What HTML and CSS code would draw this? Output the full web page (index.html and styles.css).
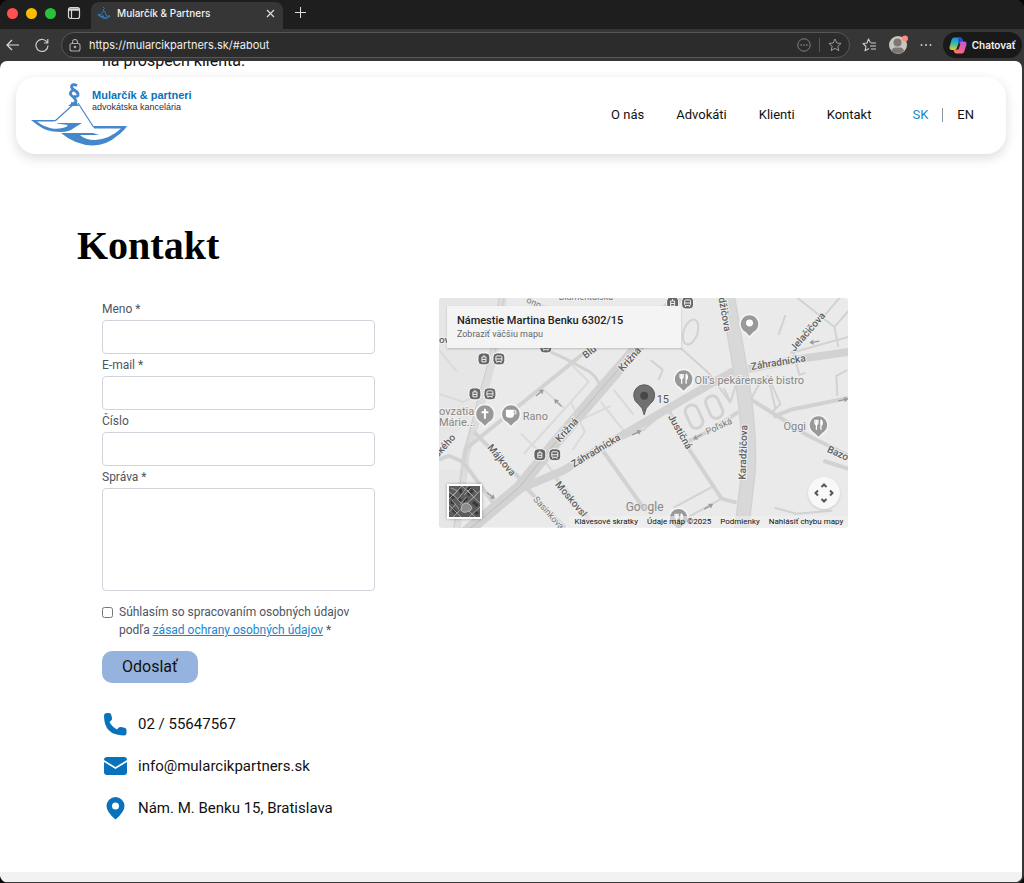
FILE: index.html
```html
<!DOCTYPE html>
<html lang="sk">
<head>
<meta charset="utf-8">
<meta name="viewport" content="width=device-width, initial-scale=1">
<title>Mularčík &amp; Partners</title>
<link rel="stylesheet" href="styles.css">
</head>
<body>
<div class="window">
  <div class="tabs">
    <div class="lights"><span class="light red"></span><span class="light yellow"></span><span class="light green"></span></div>
    <button class="icon-btn tab-menu" aria-label="Karty"><svg width="14" height="14" viewBox="0 0 14 14" fill="none" stroke="#d8d8d8" stroke-width="1.2"><rect x="1.5" y="1.5" width="11" height="11" rx="2"/><path d="M2 3.5h10" stroke-width="2.4"/><path d="M4.500 4v8"/></svg></button>
    <div class="tab">
      <svg width="14" height="14" viewBox="0 0 14 14" fill="none" stroke="#2f77b8"><path d="M6 1l1.500 1.500L6 4l1.500 1.500M6.500 5L4 8.500H1M7.500 5L9.500 10H13"/><path d="M1 8.500q3 3 6 1.500M4 10.500q4 3.500 9-.5" stroke-width="1.500"/></svg>
      <span class="tab-title">Mularčík &amp; Partners</span>
      <button class="icon-btn" aria-label="Zavrieť kartu"><svg width="9" height="9" viewBox="0 0 9 9" stroke="#ddd" stroke-width="1.2"><path d="M1 1l7 7M8 1L1 8"/></svg></button>
    </div>
    <button class="icon-btn new-tab" aria-label="Nová karta"><svg width="11" height="11" viewBox="0 0 11 11" stroke="#ddd"><path d="M5.500 0v11M0 5.500h11"/></svg></button>
  </div>
  <div class="toolbar">
    <button class="icon-btn" aria-label="Späť"><svg width="14" height="12" viewBox="0 0 14 12" fill="none" stroke="#ddd" stroke-width="1.2"><path d="M13 6H1M6 1L1 6l5 5"/></svg></button>
    <button class="icon-btn" aria-label="Obnoviť"><svg width="14" height="14" viewBox="0 0 14 14" fill="none" stroke="#ccc" stroke-width="1.2"><path d="M12.500 5A6 6 0 1 0 13 7.500M12.800 1v4H9"/></svg></button>
    <div class="address">
      <svg width="12" height="13" viewBox="0 0 12 13" fill="none" stroke="#aaa" stroke-width="1.1"><rect x="1" y="4.500" width="10" height="7.500" rx="2"/><path d="M3.500 4.500V3a2.500 2.500 0 0 1 5 0v1.500"/><circle cx="6" cy="8" r=".8" fill="#bbb"/></svg>
      <input class="url" type="text" aria-label="Adresa" value="https://mularcikpartners.sk/#about">
      <button class="icon-btn" aria-label="Možnosti stránky"><svg width="14" height="14" viewBox="0 0 14 14" fill="none" stroke="#808080"><circle cx="7" cy="7" r="6.200"/><path d="M3.500 7h1.500M6.200 7h1.500M9 7h1.500" stroke-width="1.500"/></svg></button>
      <span class="address-split"></span>
      <button class="icon-btn" aria-label="Obľúbiť"><svg width="14" height="14" viewBox="0 0 14 14" fill="none" stroke="#999" stroke-linejoin="round"><path d="M7 1l1.800 4 4.300.4-3.300 2.900 1 4.300L7 10.400l-3.800 2.200 1-4.300L.9 5.400l4.300-.4z"/></svg></button>
    </div>
    <div class="actions">
      <button class="icon-btn" aria-label="Obľúbené"><svg width="14" height="14" viewBox="0 0 14 14" fill="none" stroke="#ccc" stroke-linejoin="round" stroke-width="1.1"><path d="M8.500 4.800L6.500 1 5 5 1 5.500l3 3-1 4.300 4-2.300M9 5h5M8 8h6M9 11h5"/></svg></button>
      <button class="icon-btn" aria-label="Profil"><svg width="20" height="20" viewBox="0 0 20 20"><circle cx="10" cy="10" r="9" fill="#c9c6c2"/><circle cx="9.500" cy="7.500" r="4" fill="#7d7873"/><path d="M3.200 16q1.300-3.500 4-3.500h5q2.700 0 4 3.500a9 9 0 0 1-13 0z" fill="#7d7873"/><circle cx="17" cy="3.500" r="3" fill="#ff8d86"/></svg></button>
      <button class="icon-btn" aria-label="Ďalšie"><svg width="12" height="4" viewBox="0 0 12 4" fill="#ccc"><circle cx="1.500" cy="2" r="1"/><circle cx="6" cy="2" r="1"/><circle cx="10.500" cy="2" r="1"/></svg></button>
    </div>
    <button class="copilot"><svg width="18" height="17" viewBox="0 0 18 17"><defs><linearGradient id="cpa" x1="0" y1="0" x2="0" y2="1"><stop offset="0" stop-color="#168ce8"/><stop offset=".5" stop-color="#35bda0"/><stop offset="1" stop-color="#f2c62c"/></linearGradient><linearGradient id="cpb" x1="1" y1="0" x2="0" y2="1"><stop offset="0" stop-color="#a75cf0"/><stop offset=".5" stop-color="#ee5c9a"/><stop offset="1" stop-color="#ff8a3c"/></linearGradient></defs><path d="M5 .5h6q2 0 2.500 2l.5 2h-2q-2 0-2.600 2L8 11q-.6 2-2.500 2H2Q0 12.500.5 10L2.500 3Q3.200.5 5 .5z" fill="url(#cpa)"/><path d="M9 .5h2.500q1.500 0 2 2l.5 2h-2q-1.500 0-2.500 1.500z" fill="#1a4fd0"/><path d="M13 4.500h3q2 .5 1.500 3l-2 6.500q-.7 2.500-2.500 2.500H7.500q-2 0-2.500-2L4.500 13H6q2 0 2.600-2l1.500-4.500q.7-2 2.900-2z" fill="url(#cpb)"/><path d="M9.800 6.500l1.700 0-2 6H7.300z" fill="#222"/></svg>Chatovať</button>
  </div>

  <div class="page">
    <p class="excerpt">na prospech klienta.</p>
    <header class="site-header">
      <a class="brand" href="#top">
        <svg class="brand-mark" width="97" height="63" viewBox="0 0 97 63">
          <g fill="#4488cb"><path fill-rule="evenodd" d="M0 37h25l-2 1.500H6q6 5 15 7 8 1 14-1.500l2-2-11-1.500V40h25q-5 3-8 5-5 4-13 4-10 0-17-3-6-3-13-9z"/><path fill-rule="evenodd" d="M30 50h32l6 2H49q5 5 15 5 15-1 26-11.500H63L62 43h34q-3 5-10 10-10 9-24 9.500-18-.5-32-12.500z"/><path d="M37 23l7-5 4 5z"/></g>
          <path d="M24 38L44 20M47 20l15.500 24" stroke="#4488cb" stroke-width="1.200"/>
          <path d="M46 2.500q-5-2-5.500 1 0 2 3.500 4t3 5q-1 1.500-4 1M43 6.500q-5 2.500-3 5.500 5 4 5 6.500 0 2.500-5 2" fill="none" stroke="#4488cb" stroke-width="2.800"/>
        </svg>
        <span class="brand-text"><strong class="brand-name">Mularčík &amp; partneri</strong><span class="brand-sub">advokátska kancelária</span></span>
      </a>
      <nav class="nav">
        <a href="#about">O nás</a><a href="#lawyers">Advokáti</a><a href="#clients">Klienti</a><a href="#contact">Kontakt</a>
        <div class="langs"><a class="active" href="#sk">SK</a><span class="lang-split"></span><a href="#en">EN</a></div>
      </nav>
    </header>

    <main class="contact" id="contact">
      <h1 class="title">Kontakt</h1>
      <div class="columns">
        <div class="left">
          <form class="form">
            <label for="name">Meno *</label><input class="field" id="name" type="text">
            <label for="email">E-mail *</label><input class="field" id="email" type="email">
            <label for="phone">Číslo</label><input class="field" id="phone" type="tel">
            <label for="message">Správa *</label><textarea class="field message" id="message"></textarea>
            <div class="consent"><input class="check" type="checkbox" id="consent"><label for="consent">Súhlasím so spracovaním osobných údajov podľa <a href="#privacy">zásad ochrany osobných údajov</a> *</label></div>
            <button class="submit" type="submit">Odoslať</button>
          </form>
          <ul class="details">
            <li><svg width="26" height="26" viewBox="0 0 26 26" fill="#0873bc"><path d="M2 5Q2 2 5 2h2q2 0 2.300 2l.7 3q.3 1.500-.8 2.500L7.500 11q2.500 5 7.500 7.500l1.500-1.700q1-1.100 2.500-.8l3.500.7q2 .5 2 2.300v3q0 2.500-3 2.500Q2 24 2 5z"/></svg>02 / 55647567</li>
            <li><svg width="26" height="26" viewBox="0 0 26 26" fill="#0873bc"><path d="M2 7q0-3 3-3h17q3 0 3 3l-11.500 7zM2 9l11.500 7L25 9v10q0 3-3 3H5q-3 0-3-3z"/></svg>info@mularcikpartners.sk</li>
            <li><svg width="26" height="26" viewBox="0 0 26 26" fill="#0873bc"><path fill-rule="evenodd" d="M13.500 2A9 9 0 0 0 4.500 11q0 6 9 13.500 9-7.500 9-13.500a9 9 0 0 0-9-9zm0 5.500a3.500 3.500 0 1 1 0 7 3.500 3.500 0 0 1 0-7z"/></svg>Nám. M. Benku 15, Bratislava</li>
          </ul>
        </div>
        <div class="map">
          <svg class="map-canvas" viewBox="438 298 410 230" preserveAspectRatio="xMidYMid slice" role="img" aria-label="Mapa">
            <defs>
              <g id="tram"><rect x="-6" y="-6" width="12" height="12" rx="4" fill="#666" stroke="#fff" stroke-width="1"/><path d="M-2 -2h4v5h-4zM0 -4v2M-2 0.500h4" stroke="#f2f2f2" fill="none"/></g>
              <g id="bus"><rect x="-6" y="-6" width="12" height="12" rx="4" fill="#666" stroke="#fff" stroke-width="1"/><rect x="-3" y="-3" width="6" height="5.500" rx="1" fill="none" stroke="#f2f2f2"/><path d="M-3 0h6M-2 3v1M2 3v1" stroke="#f2f2f2"/></g>
              <path id="pin" d="M0 13L-4.500 8.500A9.500 9.500 0 1 1 4.500 8.500z" fill="#999" stroke="#f6f6f6" stroke-width="1.500"/>
              <g id="fork" fill="none" stroke="#fff" stroke-width="1.300"><path d="M-3.500-5v3q0 1.500 1.500 1.500T-.5-2v-3M-2-5v10M2.500-5v10M2.500-5q2 2 1 5h-1"/></g>
              <path id="arrow" d="M-5 0H4M1-2l3 2-3 2" fill="none" stroke="#999" stroke-width="1.300"/>
            </defs>
            <rect x="438" y="298" width="410" height="230" fill="#eaeaea"/>
            <path d="M438 298h64l-14 68-18 50-32 42zM438 470l22 0-6 58h-16z" fill="#e6e6e6"/>
            <g fill="none" stroke="#d2d2d2" stroke-linejoin="round">
              <path d="M502 298l-10 60-12 46-15 50-9 74" stroke="#dcdcdc" stroke-width="8"/>
              <path d="M498 298l-10 62-13 46-12 50-10 72M503 298l-10 60" stroke="#ccc" stroke-width="1"/>
              <path d="M438 460l10-4 14 6 34 46M463 461l2-12 133-108M473 432l46 47 9 12 36 37M553 475l36 46" stroke-width="4"/>
              <path d="M525 300l35 12 25 4M438 350l18 22M438 394l24 8 14-6M543 390l20 18M573 399l-50 55M520 434l23 22M535 450l35 45M568 362l20 20-18 20 14 30-12 18M600 402l24 30M613 390l20 25M580 420l30-14" stroke="#dadada" stroke-width="2"/>
              <path d="M541 348l24 11 24 13q12 9 11 24" stroke-width="3"/>
              <path d="M680 348l28 25 22 30M650 360l12 10-4 10M785 315l-7 20M723 388l7 14 5-16M673 508l41-22M683 520l38-21M623 438l20-8 14-12M750 400l10-18M767 375l8 34M792 350l7 25 6-2M837 396l-1-20 11-6" stroke-width="2"/>
              <path d="M600 448l44 62M667 408l14 30 40 61 15 4M687 442l24-12 27-18M748 398l35 22 23 15 24 12 18 9M773 417l17-7 58-12M823 461l25 8" stroke-width="4"/>
              <path d="M839 298l-22 26-26 29M797 298l37 29 4 20M834 327l14-16M790 353l58-16M770 382l10 22-10 10M774 508l22 6 36-3" stroke-width="2"/>
              <path d="M465 533l52-43 45-19 64-38 58-34 49-28M748 369l52-10 48-7" stroke-width="8"/>
              <path d="M678 296l-46 57-34 39-41 48-39 48-56 47" stroke-width="12"/>
              <path d="M678 296l-46 57-34 39-41 48-39 48-56 47" stroke="#bdbdbd" stroke-width="1"/>
              <path d="M727 296l13 75q10 60 8 100l-7 60" stroke-width="15"/>
              <path d="M727 296l13 75q10 60 8 100l-7 60" stroke="#d8d8d8" stroke-width="12"/>
              <ellipse cx="690" cy="332" rx="7" ry="13" transform="rotate(18 690 332)" stroke-width="2"/>
              <rect x="687" y="405" width="13" height="24" rx="6" transform="rotate(-24 693 417)" stroke-width="3"/>
              <rect x="707" y="396" width="13" height="23" rx="6" transform="rotate(-24 713 407)" stroke-width="3"/>
            </g>
            <use href="#arrow" transform="translate(539 393) rotate(-40)"/><use href="#arrow" transform="translate(557 403) rotate(225)"/><use href="#arrow" transform="translate(490 496) rotate(40)"/><use href="#arrow" transform="translate(636 433) rotate(-25)"/><use href="#arrow" transform="translate(697 437) rotate(150)"/><use href="#arrow" transform="translate(708 507) rotate(-30)"/><use href="#arrow" transform="translate(843 400) rotate(-12)"/><use href="#arrow" transform="translate(814 342) rotate(170)"/>
            <g class="road-label">
              <text transform="translate(559 443) rotate(-48)">Križná</text><text transform="translate(622 372) rotate(-48)">Križná</text>
              <text transform="translate(573 468) rotate(-31)">Záhradnícka</text><text transform="translate(751 370) rotate(-9)">Záhradnícka</text>
              <text transform="translate(745 480) rotate(-88)">Karadžičova</text><text transform="translate(718 298) rotate(80)">džičova</text>
              <text transform="translate(486 448) rotate(50)">Májkova</text><text transform="translate(554 485) rotate(50)">Moskovsl</text>
              <text transform="translate(667 417) rotate(60)">Justičná</text><text transform="translate(794 352) rotate(-49)">Jelačičova</text>
              <text transform="translate(585 359) rotate(-38)">Blu</text><text transform="translate(826 452) rotate(24)">Bazo</text>
              <text transform="translate(437 458) rotate(-48)">ského</text><text x="438" y="343">ov</text>
            </g>
            <g class="minor-label"><text transform="translate(532 500) rotate(48)">Sasinkova</text><text transform="translate(707 435) rotate(-25)">Poľská</text><text x="558" y="300">Blumentálska</text><text transform="translate(525 302) rotate(25)">onn</text></g>
            <g class="place-label"><text x="694" y="384">Oli’s pekárenské bistro</text><text x="522" y="420">Rano</text><text x="783" y="430">Oggi</text><text x="438" y="415">ovzatia</text><text x="438" y="426">Márie...</text><text x="656" y="403" fill="#555">15</text></g>
            <use href="#tram" x="483" y="359"/><use href="#bus" x="498" y="359"/><use href="#tram" x="474" y="394"/><use href="#bus" x="489" y="394"/><use href="#tram" x="539" y="455"/><use href="#bus" x="554" y="455"/><use href="#tram" x="672" y="303"/><use href="#bus" x="687" y="303"/><use href="#bus" x="545" y="347"/>
            <use href="#pin" x="484" y="414"/><path d="M484 409v10M480.500 412.500h7" stroke="#fff" stroke-width="2"/>
            <use href="#pin" x="510" y="414"/><path d="M505 410h8v5q0 3-3 3h-2q-3 0-3-3z" fill="#fff"/><path d="M513 411h2v3h-2" fill="none" stroke="#fff"/>
            <use href="#pin" x="683" y="379"/><use href="#fork" x="683" y="379"/><use href="#pin" x="818" y="425"/><use href="#fork" x="818" y="425"/><use href="#pin" x="678" y="518"/><use href="#fork" x="678" y="519"/>
            <use href="#pin" x="749" y="324"/><circle cx="749" cy="323" r="3.500" fill="#fff"/>
            <path d="M643.500 415q-1-7-6-11a10.500 10.500 0 1 1 12 0q-5 4-6 11z" fill="#707070" stroke="#5c5c5c"/><circle cx="643.500" cy="396" r="4" fill="#484848"/>
            <text class="google" x="625" y="511">Go<tspan fill="#b3b3b3">o</tspan>gle</text>
          </svg>
          <div class="map-card"><strong>Námestie Martina Benku 6302/15</strong><a href="#map">Zobraziť väčšiu mapu</a></div>
          <button class="satellite" aria-label="Satelitná mapa"><svg width="31" height="31" viewBox="0 0 31 31"><rect width="31" height="31" fill="#5c5c5c"/><path d="M1 9l4 3M10 3l3 4M19 9l5-5M14 16l4-4M3 22l4 5M24 16l5 4M9 12l3 3M26 26l3 2M18 2l4 1M2 16l3 1" stroke="#383838" stroke-width="3"/><path d="M0 6l9 7 10-13M0 19l12 12M4 31L31 5M13 0l18 17M0 13L13 0M8 13l18 18M20 31l11-10M2 2l7 3M24 3l5 5M0 26l7-8M15 9l7-7M5 9l5-6M11 19l6-8M22 14l6-6M3 14l7 9M18 4l6 6" stroke="#a0a0a0" fill="none"/><path d="M13 19q4-4 8 0 4 4-1 6-6 3-8-1z" fill="#8d8d8d" stroke="#bbb"/></svg></button>
          <button class="camera" aria-label="Ovládanie kamery"><svg width="20" height="20" viewBox="0 0 20 20" fill="none" stroke="#555" stroke-width="2"><path d="M7.500 4l2.500-2.500 2.500 2.500M7.500 16l2.500 2.500 2.500-2.500M4 7.500L1.500 10 4 12.500M16 7.500l2.500 2.500-2.500 2.500"/></svg></button>
          <div class="map-terms"><a href="#keys">Klávesové skratky</a><span>Údaje máp ©2025</span><a href="#terms">Podmienky</a><a href="#report">Nahlásiť chybu mapy</a></div>
        </div>
      </div>
    </main>
    <footer class="footer"></footer>
  </div>
</div>
</body>
</html>
```
FILE: styles.css
```css
* { box-sizing: border-box; }
body { margin: 0; background: #080808; font-family: Roboto, "Liberation Sans", sans-serif; color: #111; }
a { color: inherit; text-decoration: none; }
button, input, textarea { font: inherit; }
svg { display: block; flex: none; }

.window { min-height: 100vh; display: flex; flex-direction: column; background: #363636; border-radius: 9px; overflow: hidden; padding: 0 2px 2px 0; }
.icon-btn { border: 0; padding: 0; background: none; display: flex; align-items: center; }

.tabs { display: flex; align-items: center; height: 29px; margin-right: -2px; padding-left: 7px; background: #1e1e1e; font-family: Inter, sans-serif; }
.lights { display: flex; gap: 7px; margin-top: -3px; }
.light { width: 11px; height: 11px; border-radius: 50%; }
.lights { gap: 8px; }
.red { background: #ff5052; }
.yellow { background: #febc00; }
.green { background: #2ac13c; }
.tab-menu { margin: -3px 10px 0 11px; }
.tab { display: flex; align-items: center; gap: 6px; width: 192px; height: 27px; align-self: flex-end; padding: 0 8px 5px 6px; background: #363636; border-radius: 8px 8px 0 0; }
.tab-title { flex: 1; font-size: 10px; font-weight: 500; color: #f2f2f2; }
.new-tab { margin: -4px 0 0 12px; }

.toolbar { display: flex; align-items: center; gap: 15px; height: 32px; padding: 0 0 0 6px; font-family: Inter, sans-serif; }
.address { flex: 1; display: flex; align-items: center; gap: 8px; height: 26px; margin-left: -3px; padding: 0 7px; border: 1px solid #585858; border-radius: 13px; background: #2c2c2c; }
.url { flex: 1; min-width: 0; padding: 0; border: 0; background: none; color: #efefef; font-size: 11px; }
.address-split { width: 1px; height: 14px; background: #555; }
.actions { display: flex; align-items: center; gap: 12px; margin: 0 -4px 0 -3px; }
.copilot { display: flex; align-items: center; gap: 5px; height: 26px; padding: 0 6px; border: 0; border-radius: 13px; background: #191919; color: #f3f3f3; font-size: 10px; font-weight: 600; }

.page { flex: 1; display: flex; flex-direction: column; background: #fff; border-radius: 7px; overflow: hidden; }
.excerpt { display: flex; align-items: flex-end; height: 10px; margin: 0 0 6px; padding-left: 102px; font-size: 16px; line-height: 20px; overflow: hidden; }
.site-header { display: flex; align-items: center; justify-content: space-between; margin: 0 16px; padding: 6px 32px 8px 15px; border-radius: 20px; background: #fff; box-shadow: 0 4px 12px rgba(0, 0, 0, .14); }
.brand { display: flex; }
.brand-text { display: flex; flex-direction: column; margin: 6px 0 0 -36px; font-family: "Liberation Sans", sans-serif; line-height: 12px; }
.brand-name { font-size: 11px; color: #0873bc; }
.brand-sub { font-size: 9px; color: #333; }
.nav { display: flex; align-items: center; gap: 32px; font-size: 13px; }
.langs { display: flex; align-items: center; gap: 14px; margin-left: 9px; }
.active { color: #1a86cb; }
.lang-split { width: 1px; height: 14px; background: #8a93a3; }

.contact { flex: 1; padding: 68px 17% 51px 77px; }
.title { margin: 0 0 28px; font: bold 40px/48px "Liberation Serif", serif; color: #000; }
.columns { display: grid; grid-template-columns: 2fr 3fr; gap: 64px; align-items: start; padding-left: 25px; }
.form { display: flex; flex-direction: column; font-size: 12px; line-height: 22px; color: #4b5563; }
.field { width: 100%; height: 34px; padding: 6px 8px; border: 1px solid #d1d5db; border-radius: 4px; background: #fff; }
.message { height: 103px; resize: none; }
.consent { display: flex; align-items: flex-start; gap: 6px; margin: 12px 0; line-height: 18px; }
.check { flex: none; width: 11px; height: 11px; margin: 4px 0 0; }
.consent a { color: #1a86cb; text-decoration: underline; }
.submit { align-self: flex-start; padding: 0 20px; border: 0; border-radius: 10px; background: #95b3de; color: #111; font-size: 16px; line-height: 32px; }
.details { display: flex; flex-direction: column; gap: 16px; margin: 28px 0 0; padding: 0; list-style: none; font-size: 15px; }
.details li { display: flex; align-items: center; gap: 10px; }

.map { position: relative; aspect-ratio: 410 / 230; border-radius: 3px; overflow: hidden; }
.map-canvas { width: 100%; height: 100%; }
.road-label, .minor-label, .place-label { font-family: Roboto, sans-serif; paint-order: stroke; stroke: #eee; stroke-width: 2px; }
.road-label { font-size: 10px; font-weight: 500; fill: #606060; }
.minor-label { font-size: 9px; fill: #777; }
.place-label { font-size: 11px; fill: #858585; }
.google { font: 12px Roboto, sans-serif; fill: #888; }
.map-card { position: absolute; top: 8px; left: 8px; display: flex; flex-direction: column; width: 234px; padding: 7px 10px; background: #f4f4f4; box-shadow: 0 1px 2px rgba(0, 0, 0, .2); font-size: 9px; line-height: 13px; color: #666; }
.map-card strong { font-size: 11px; line-height: 15px; font-weight: 500; color: #222; }
.satellite { position: absolute; left: 8px; bottom: 9px; padding: 0; border: 2px solid #fff; background: none; box-shadow: 0 0 3px rgba(0, 0, 0, .3); }
.camera { position: absolute; right: 8px; bottom: 19px; display: flex; align-items: center; justify-content: center; width: 32px; height: 32px; padding: 0; border: 0; border-radius: 50%; background: #f8f8f8; box-shadow: 0 1px 2px rgba(0, 0, 0, .15); }
.map-terms { position: absolute; right: 0; bottom: 0; display: flex; gap: 9px; padding: 0 5px; background: rgba(240, 240, 240, .6); font-size: 8px; line-height: 12px; color: #111; }
.footer { height: 10px; background: #f2f2f2; }
```
